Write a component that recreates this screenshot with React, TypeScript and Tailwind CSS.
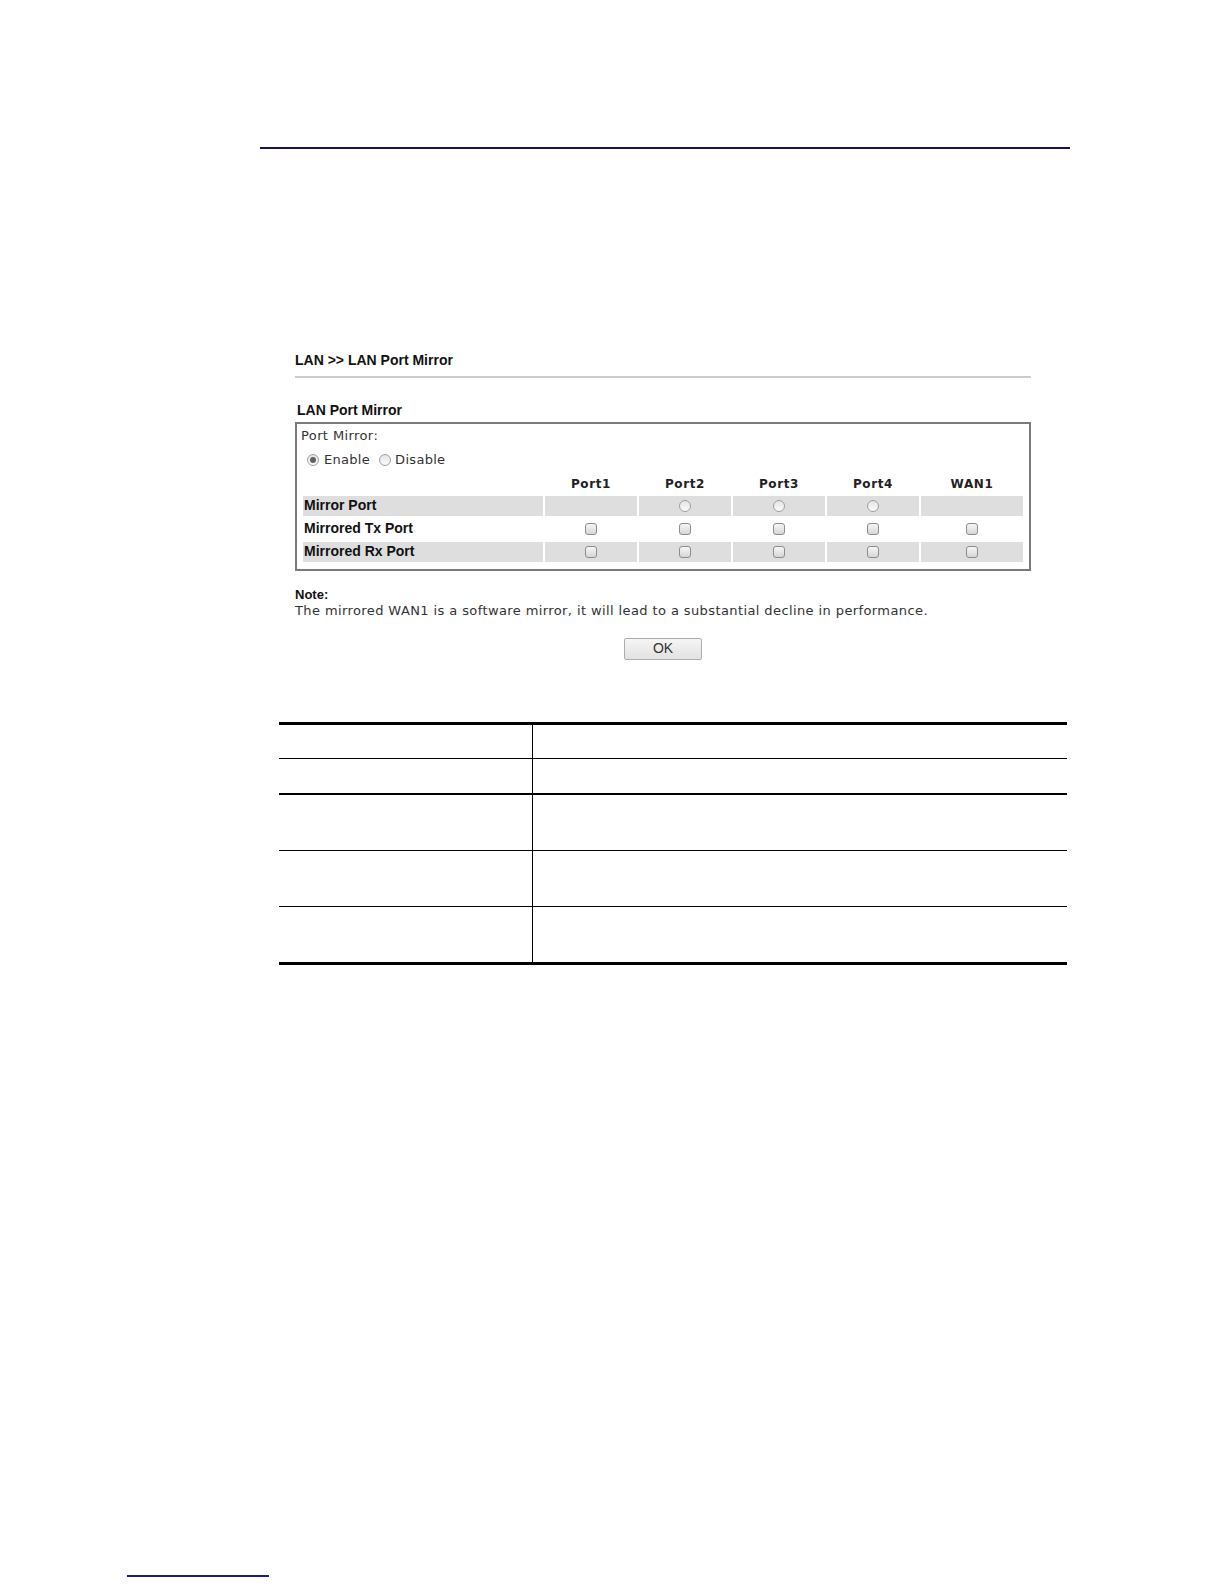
import React from "react";

const Radio = ({ checked = false }: { checked?: boolean }) => (
  <span className="inline-flex items-center justify-center w-[12px] h-[12px] rounded-full border border-[#a0a0a0] bg-gradient-to-b from-[#e4e4e4] to-[#fbfbfb] shrink-0">
    {checked && <span className="w-[6px] h-[6px] rounded-full bg-[#606060]" />}
  </span>
);

const Check = () => (
  <span className="inline-block w-[12px] h-[12px] rounded-[3px] border border-[#8c8c8c] bg-gradient-to-b from-[#f6f6f6] to-[#d6d6d6]" />
);

const ports = ["Port1", "Port2", "Port3", "Port4", "WAN1"];
const colW = ["w-[92px]", "w-[92px]", "w-[92px]", "w-[92px]", "w-[102px]"];

type Row = { label: string; gray: boolean; cells: ("radio" | "check" | null)[] };
const rows: Row[] = [
  { label: "Mirror Port", gray: true, cells: [null, "radio", "radio", "radio", null] },
  { label: "Mirrored Tx Port", gray: false, cells: ["check", "check", "check", "check", "check"] },
  { label: "Mirrored Rx Port", gray: true, cells: ["check", "check", "check", "check", "check"] },
];

const verdana = "font-['DejaVu_Sans',Verdana,sans-serif]";
const arial = "font-['Liberation_Sans',Arial,sans-serif]";

export default function App() {
  return (
    <div className="w-[1224px] h-[1584px] bg-white flex flex-col">
      <div className="mt-[147px] ml-[260px] w-[810px] h-[1.5px] bg-[#1a0f5a]" />

      <div className="ml-[295px] w-[736px] mt-[203px] flex flex-col">
        <div className={`${arial} font-bold text-[14px] leading-[16px] text-[#111]`}>LAN &gt;&gt; LAN Port Mirror</div>
        <div className="mt-[8px] h-[2px] bg-[#cccccc]" />
        <div className={`${arial} font-bold text-[14px] leading-[16px] text-[#111] mt-[24px] ml-[2px]`}>LAN Port Mirror</div>
        <div className="mt-[4px] border-2 border-[#7a7a7a] pb-[7px]">
          <div className={`${verdana} text-[13px] leading-[16px] tracking-[0.4px] text-[#333] pt-[4px] pl-[4px]`}>Port Mirror:</div>
          <div className={`${verdana} text-[13px] leading-[16px] tracking-[0.3px] text-[#333] mt-[8px] pl-[10px] flex items-center`}>
            <Radio checked />
            <span className="ml-[5px]">Enable</span>
            <span className="ml-[9px] flex"><Radio /></span>
            <span className="ml-[4px]">Disable</span>
          </div>
          <div className="px-[6px] mt-[8px] flex gap-[2px]">
            <div className="w-[240px]" />
            {ports.map((p, i) => (
              <div key={p} className={`${colW[i]} text-center ${verdana} font-bold text-[12px] leading-[16px] tracking-[0.6px] text-[#222]`}>{p}</div>
            ))}
          </div>
          <div className="px-[6px] mt-[4px] flex flex-col gap-[3px]">
            {rows.map((r) => (
              <div key={r.label} className="flex gap-[2px] h-[20px]">
                <div className={`w-[240px] flex items-center pl-[1px] ${r.gray ? "bg-[#dedede]" : ""} ${arial} font-bold text-[14px] text-[#111]`}>{r.label}</div>
                {r.cells.map((c, i) => (
                  <div key={i} className={`${colW[i]} flex items-center justify-center ${r.gray ? "bg-[#dedede]" : ""}`}>
                    {c === "radio" && <Radio />}
                    {c === "check" && <Check />}
                  </div>
                ))}
              </div>
            ))}
          </div>
        </div>
        <div className={`${arial} font-bold text-[13px] leading-[16px] text-[#111] mt-[16px]`}>Note:</div>
        <div className={`${verdana} text-[13px] leading-[16px] tracking-[0.4px] text-[#333] whitespace-nowrap`}>The mirrored WAN1 is a software mirror, it will lead to a substantial decline in performance.</div>
        <div className="mt-[19px] flex justify-center">
          <div className={`w-[78px] h-[22px] border border-[#adadad] rounded-[2px] bg-gradient-to-b from-[#f5f5f5] to-[#e2e2e2] flex items-center justify-center ${arial} text-[14px] text-[#333]`}>OK</div>
        </div>
      </div>

      <div className="ml-[279px] w-[788px] mt-[62px] border-t-[3px] border-b-[3px] border-black">
        {[
          { h: "h-[34px]", b: "border-b border-black" },
          { h: "h-[36px]", b: "border-b-2 border-black" },
          { h: "h-[56px]", b: "border-b border-black" },
          { h: "h-[56px]", b: "border-b border-black" },
          { h: "h-[55px]", b: "" },
        ].map((r, i) => (
          <div key={i} className={`flex ${r.h} ${r.b}`}>
            <div className="w-[254px] border-r border-black" />
            <div className="flex-1" />
          </div>
        ))}
      </div>

      <div className="mt-auto mb-[7px] ml-[127px] w-[142px] h-[2px] bg-[#1a1a8c]" />
    </div>
  );
}
